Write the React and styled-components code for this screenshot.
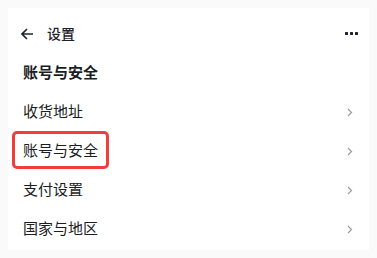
import styled, { createGlobalStyle } from 'styled-components';

const GlobalStyle = createGlobalStyle`
  body {
    margin: 8px;
    background: #fafafa;
    font-family: "Noto Sans CJK SC", "Noto Sans", sans-serif;
    color: #1f2329;
  }
`;

const Card = styled.div`
  background: #ffffff;
  height: 242px;
  box-sizing: border-box;
  padding-top: 5px;
  box-shadow: 0 1px 4px rgba(0, 0, 0, 0.08);
`;

const Header = styled.div`
  height: 39px;
  display: flex;
  align-items: center;
  padding: 0 11px 0 13px;
`;

const BackButton = styled.span`
  display: flex;
  align-items: center;
  width: 26px;
  margin-top: 2px;
`;

const HeaderTitle = styled.span`
  flex: 1;
  font-size: 14px;
  font-weight: 500;
`;

const More = styled.span`
  display: flex;
  gap: 2px;
  margin-top: 2px;
`;

const Dot = styled.i`
  width: 3px;
  height: 3px;
  background: #1f2329;
  border-radius: 0.5px;
`;

const Row = styled.div`
  height: 39px;
  display: flex;
  align-items: center;
  justify-content: space-between;
  padding: 0 16px 0 15px;
  font-size: 15px;
  color: #1a1d23;
  font-weight: ${(p) => (p.$title ? 600 : 400)};
`;

const Label = styled.span`
  ${(p) =>
    p.$active &&
    `
    margin-left: -11px;
    padding: 0 8px;
    height: 32px;
    display: flex;
    align-items: center;
    border: 3px solid #f23d3d;
    border-radius: 5px;
  `}
`;

const ChevronBox = styled.span`
  display: flex;
  margin-top: 3px;
`;

const Chevron = () => (
  <ChevronBox>
    <svg width="6" height="9" viewBox="0 0 6 9" fill="none">
      <path d="M1 1l3.5 3.5L1 8" stroke="#979ca6" strokeWidth="1.2" />
    </svg>
  </ChevronBox>
);

const items = [
  { id: 1, name: '收货地址' },
  { id: 2, name: '账号与安全', active: true },
  { id: 3, name: '支付设置' },
  { id: 4, name: '国家与地区' },
];

const App = () => (
  <>
    <GlobalStyle />
    <Card>
      <Header>
        <BackButton>
          <svg width="13" height="12" viewBox="0 0 13 12" fill="none">
            <path d="M12 6H1.5M6 1L1 6l5 5" stroke="#1f2329" strokeWidth="1.6" />
          </svg>
        </BackButton>
        <HeaderTitle>设置</HeaderTitle>
        <More>
          <Dot />
          <Dot />
          <Dot />
        </More>
      </Header>
      <Row $title>账号与安全</Row>
      {items.map((item) => (
        <Row key={item.id}>
          <Label $active={item.active}>{item.name}</Label>
          <Chevron />
        </Row>
      ))}
    </Card>
  </>
);

export default App;
